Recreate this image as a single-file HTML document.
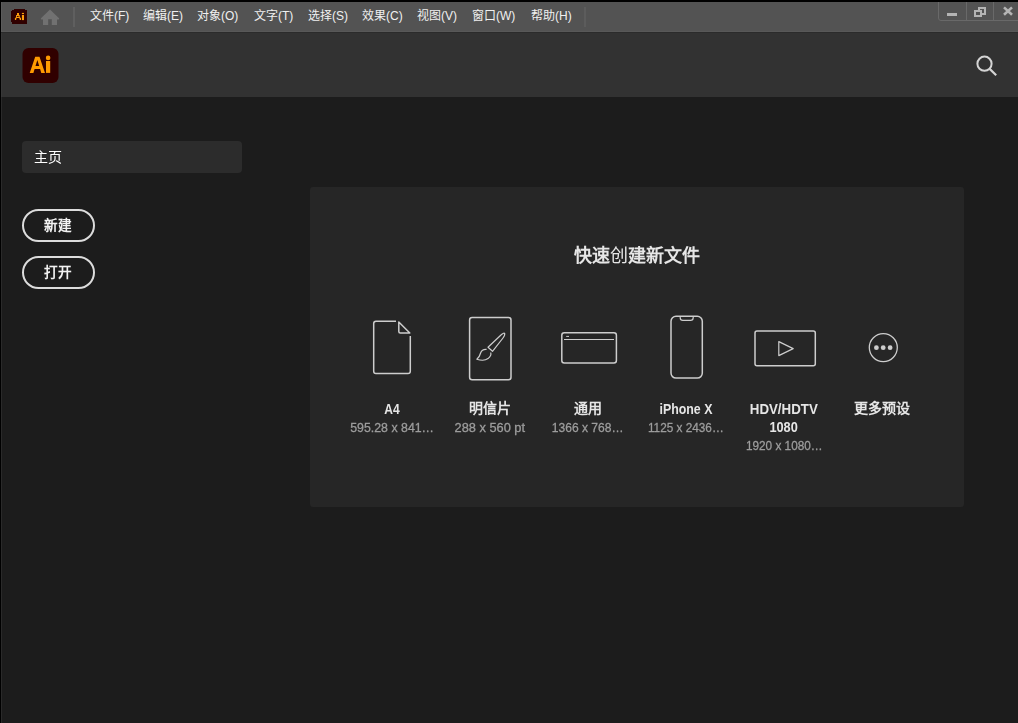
<!DOCTYPE html>
<html lang="zh-CN">
<head>
<meta charset="utf-8">
<title>Adobe Illustrator</title>
<style>
*{box-sizing:border-box;}
html,body{margin:0;padding:0;background:#1c1c1c;}
body{width:1018px;height:723px;background:#1c1c1c;font-family:"Liberation Sans",sans-serif;overflow:hidden;position:relative;color:#fff;}
.abs{position:absolute;}
#frame-top{left:0;top:0;width:1018px;height:2px;background:#000;}
#frame-left{left:0;top:0;width:1px;height:723px;background:#000;}
#frame-left2{left:1px;top:97px;width:1px;height:626px;background:#2a2a2a;}
#ml-left{left:1px;top:2px;width:1px;height:30px;background:#5b5b5b;}
#ml-bot{left:1px;top:31px;width:1017px;height:1px;background:#585858;}
#hd-left{left:1px;top:33px;width:1px;height:64px;background:#383838;}
#menubar{left:1px;top:2px;width:1017px;height:30px;background:#535353;}
#menuline{left:1px;top:32px;width:1017px;height:1px;background:#2b2b2b;}
#header{left:1px;top:33px;width:1017px;height:64px;background:#323232;}
.mi{position:absolute;top:2px;height:30px;line-height:29px;font-size:12px;color:#f0f0f0;white-space:nowrap;}
.sep{position:absolute;top:7px;width:2px;height:20px;background:#5f5f5f;}
#home{left:22px;top:141px;width:220px;height:32px;border-radius:4px;background:#2c2c2c;font-size:14px;line-height:32px;padding-left:12px;color:#fff;}
.btn{position:absolute;left:22px;width:73px;height:33px;border:2px solid #dcdcdc;border-radius:17px;font-size:13.6px;font-weight:bold;line-height:29px;text-align:center;color:#f2f2f2;padding-right:2px;}
#panel{left:310px;top:187px;width:654px;height:320px;border-radius:3px;background:#262626;}
#title{left:0;top:57px;width:654px;text-align:center;font-size:18px;font-weight:bold;line-height:24px;color:#e6e6e6;}
.col{position:absolute;top:0;width:98px;height:320px;}
.col svg{position:absolute;overflow:visible;}
.nm{position:absolute;left:-10px;width:118px;text-align:center;font-size:14px;font-weight:bold;line-height:18px;color:#e6e6e6;top:212px;white-space:nowrap;}
.sz{position:absolute;left:-10px;width:118px;text-align:center;font-size:13px;line-height:18px;color:#9d9d9d;top:232px;white-space:nowrap;-webkit-text-stroke:0.3px #9d9d9d;}
.lat{top:213px;}
.sx{display:inline-block;transform-origin:50% 50%;}
#panel,#home,.btn{will-change:transform;}
</style>
</head>
<body>
<div class="abs" id="menubar"></div>
<div class="abs" id="menuline"></div>
<div class="abs" id="header"></div>
<div class="abs" id="frame-left2"></div>
<div class="abs" id="ml-bot"></div>
<div class="abs" id="ml-left"></div>
<div class="abs" id="hd-left"></div>
<div class="abs" id="frame-top"></div>
<div class="abs" id="frame-left"></div>

<!-- menubar content -->
<svg class="abs" style="left:10px;top:8px" width="18" height="17" viewBox="10 8 18 17">
  <path d="M14 9 H25 V10 H27 V24 H12 V22 H11 V11 H12 V10 H14 Z" fill="#300000"/>
  <path d="M17 13 H19 V15 H19.7 V17 H20.3 V18 H21 V20.1 H19.7 V18.5 H19.1 V18 H16.7 V18.5 H16.2 V20.1 H14.9 V18 H15.7 V17 H16.1 V15 H17 Z M17.1 15.9 H18.6 V17 H17.1 Z" fill="#ff9d0a" fill-rule="evenodd"/>
  <rect x="21.9" y="12.9" width="2.1" height="1.2" fill="#ff9d0a"/>
  <rect x="21.9" y="15" width="2.1" height="5.1" fill="#ff9d0a"/>
</svg>
<svg class="abs" style="left:40px;top:9px" width="20" height="17" viewBox="40 9 20 17">
  <path d="M50 9.4 L59.3 18.5 L58 19.9 L57 19 L57 25 L51.8 25 L51.8 19.2 L48.2 19.2 L48.2 25 L43 25 L43 19 L42 19.9 L40.7 18.5 Z" fill="#717171"/>
</svg>
<div class="sep" style="left:73px"></div>
<div class="mi" style="left:90px">文件(F)</div>
<div class="mi" style="left:143px">编辑(E)</div>
<div class="mi" style="left:197px">对象(O)</div>
<div class="mi" style="left:254px">文字(T)</div>
<div class="mi" style="left:308px">选择(S)</div>
<div class="mi" style="left:362px">效果(C)</div>
<div class="mi" style="left:417px">视图(V)</div>
<div class="mi" style="left:472px">窗口(W)</div>
<div class="mi" style="left:531px">帮助(H)</div>
<div class="sep" style="left:584px;background:#5c5c5c"></div>

<!-- window controls -->
<svg class="abs" style="left:937px;top:2px" width="81" height="20" viewBox="937 2 81 20" shape-rendering="auto">
  <path d="M938.5 2 L938.5 18 Q938.5 20.5 941 20.5 L1018 20.5" fill="none" stroke="#696969" stroke-width="1"/>
  <path d="M966.5 2 V20 M993.5 2 V20" stroke="#696969" stroke-width="1"/>
  <rect x="947" y="13" width="10" height="3" fill="#b4b4b4"/>
  <path d="M978 7 H986 V15 H978 Z M980 9 V13 H984 V9 Z" fill="#b4b4b4" fill-rule="evenodd"/>
  <rect x="974" y="10" width="8" height="7" fill="#535353"/>
  <path d="M974 10 H982 V17 H974 Z M976 12 V15 H980 V12 Z" fill="#b4b4b4" fill-rule="evenodd"/>
  <path d="M1004 7.4 L1012 14.8 M1012 7.4 L1004 14.8" stroke="#b4b4b4" stroke-width="2.6"/>
</svg>

<!-- header -->
<svg class="abs" style="left:22px;top:48px" width="37" height="35" viewBox="22 48 37 35">
  <rect x="22.5" y="48" width="36" height="35" rx="6" fill="#300000"/>
  <path d="M29.7 72.9 L35.2 56.7 L39.5 56.7 L45 72.9 L41.3 72.9 L40.1 69 L34.6 69 L33.4 72.9 Z M35.5 66.1 L39.2 66.1 L37.35 60 Z" fill="#ff9a00" fill-rule="evenodd"/>
  <rect x="46" y="61" width="4.2" height="11.9" fill="#ff9a00"/>
  <circle cx="48.1" cy="57.9" r="2.3" fill="#ff9a00"/>
</svg>
<svg class="abs" style="left:974px;top:53px" width="26" height="26" viewBox="974 53 26 26">
  <circle cx="984.5" cy="63.7" r="7.1" fill="none" stroke="#d4d4d4" stroke-width="2"/>
  <path d="M989.7 68.9 L996.2 75.2" stroke="#d4d4d4" stroke-width="2.2" fill="none"/>
</svg>

<!-- sidebar -->
<div class="abs" id="home">主页</div>
<div class="btn" style="top:209px">新建</div>
<div class="btn" style="top:256px">打开</div>

<!-- panel -->
<div class="abs" id="panel">
  <div class="abs" id="title">快速<span style="font-weight:300">创</span>建新文件</div>
  <svg class="abs" style="left:0;top:0" width="654" height="320" viewBox="310 187 654 320" fill="none" stroke="#cdcdcd" stroke-width="1.5" stroke-linejoin="round">
    <!-- A4 -->
    <path d="M396 321.2 H376 Q373.7 321.2 373.7 323.5 V371.3 Q373.7 373.6 376 373.6 H408 Q410.3 373.6 410.3 371.3 V336"/>
    <path d="M398.8 322 V331.5 Q398.8 333 400.3 333 H409.8 Z"/>
    <!-- postcard -->
    <rect x="469.6" y="317.5" width="41.4" height="62.3" rx="2.5"/>
    <path d="M488 347.3 L501.5 334.5 Q504 332.5 504.6 333.3 Q505.3 335 503 338 L492.5 351.3 Z" stroke-width="1.2"/>
    <path d="M486.6 349.4 Q482 349 480.6 353 Q479.6 357 476.8 359.2 Q484 361.6 488 358.6 Q492 355.2 490.6 352.4" stroke-width="1.2"/>
    <!-- web -->
    <rect x="561.8" y="332.7" width="54.6" height="30.4" rx="2.5"/>
    <path d="M564 339.5 H614" stroke-width="1"/>
    <path d="M566.2 336.4 H569" stroke-width="1"/>
    <!-- phone -->
    <rect x="671" y="316.2" width="31.3" height="61.9" rx="5"/>
    <path d="M680.2 316.4 V317.8 Q680.2 320.4 682.8 320.4 H690.6 Q693.2 320.4 693.2 317.8 V316.4" stroke-width="1.2"/>
    <!-- video -->
    <rect x="755" y="331.1" width="60.3" height="34.6" rx="2"/>
    <path d="M778.8 341.6 V355.6 L793.2 348.6 Z" stroke-width="1.2"/>
    <!-- more -->
    <circle cx="883.3" cy="347.6" r="14" stroke-width="1.3"/>
    <g fill="#cdcdcd" stroke="none"><circle cx="876.4" cy="347.7" r="2.4"/><circle cx="883.2" cy="347.7" r="2.4"/><circle cx="890.1" cy="347.7" r="2.4"/></g>
  </svg>
  <div class="col" style="left:33px"><div class="nm lat"><span class="sx" style="transform:scaleX(.86)">A4</span></div><div class="sz"><span class="sx" style="transform:scaleX(.95)">595.28 x 841…</span></div></div>
  <div class="col" style="left:131px"><div class="nm">明信片</div><div class="sz"><span class="sx" style="transform:scaleX(.985)">288 x 560 pt</span></div></div>
  <div class="col" style="left:229px"><div class="nm">通用</div><div class="sz"><span class="sx" style="transform:scaleX(.927)">1366 x 768…</span></div></div>
  <div class="col" style="left:327px"><div class="nm lat"><span class="sx" style="transform:scaleX(.885)">iPhone X</span></div><div class="sz"><span class="sx" style="transform:scaleX(.907)">1125 x 2436…</span></div></div>
  <div class="col" style="left:425px"><div class="nm lat"><span class="sx" style="transform:scaleX(.95)">HDV/HDTV</span></div><div class="nm lat" style="top:231px"><span class="sx" style="transform:scaleX(.91)">1080</span></div><div class="sz" style="top:250px"><span class="sx" style="transform:scaleX(.907)">1920 x 1080…</span></div></div>
  <div class="col" style="left:523px"><div class="nm">更多预设</div></div>
</div>
</body>
</html>
